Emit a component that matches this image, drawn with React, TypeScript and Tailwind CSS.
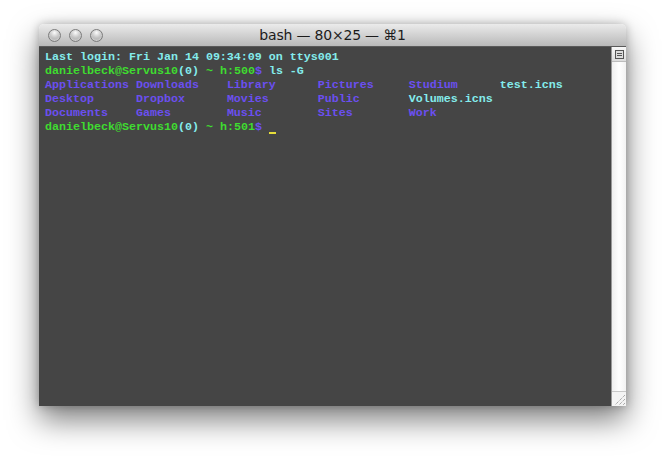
import React from 'react'

const CYAN = 'text-[#84ecec]'
const GREEN = 'text-[#3fdc30]'
const BLUE = 'text-[#6b4ff0]'

const rows = [
  ['Applications', 'Downloads', 'Library', 'Pictures', 'Studium', 'test.icns'],
  ['Desktop', 'Dropbox', 'Movies', 'Public', 'Volumes.icns'],
  ['Documents', 'Games', 'Music', 'Sites', 'Work'],
]

const isFile = (name: string) => name.endsWith('.icns')

function Prompt({ num }: { num: number }) {
  return (
    <>
      <span className={GREEN}>danielbeck@Servus10</span>
      <span className={CYAN}>(0)</span>
      <span className={GREEN}> ~ h:{num}</span>
      <span className={BLUE}>$</span>
    </>
  )
}

function Light() {
  return (
    <div className="w-[13px] h-[13px] rounded-full border border-[#7c7c7c] bg-[radial-gradient(circle_at_50%_25%,#fbfbfb_0%,#c9c9c9_45%,#8f8f8f_100%)] shadow-[inset_0_-1px_2px_rgba(255,255,255,0.6)]" />
  )
}

export default function App() {
  return (
    <div className="w-[665px] h-[460px] bg-white pl-[39px] pt-[24px]">
      <div className="w-[587px] h-[382px] flex flex-col rounded-t-[5px] shadow-[0_14px_30px_rgba(0,0,0,0.5),0_0_10px_rgba(0,0,0,0.25)]">
        {/* title bar */}
        <div className="relative h-[23px] flex items-center rounded-t-[5px] border-b border-[#5a5a5a] bg-gradient-to-b from-[#ebebeb] to-[#b9b9b9]">
          <div className="flex gap-[8px] pl-[9px]">
            <Light />
            <Light />
            <Light />
          </div>
          <div className="absolute inset-0 flex items-center justify-center text-[14px] text-[#1c1c1c] font-['DejaVu_Sans',sans-serif] tracking-[-0.2px]">
            bash — 80×25 — ⌘1
          </div>
        </div>

        <div className="flex flex-1 min-h-0">
          {/* terminal */}
          <div className="flex-1 bg-[#454545] pl-[6px] pt-[3px] font-['Liberation_Mono',monospace] font-bold text-[11.67px] leading-[14px] whitespace-pre">
            <div className={CYAN}>Last login: Fri Jan 14 09:34:09 on ttys001</div>
            <div>
              <Prompt num={500} />
              <span className={CYAN}> ls -G</span>
            </div>
            {rows.map((row, i) => (
              <div key={i}>
                {row.map((name, j) => (
                  <span key={j} className={isFile(name) ? CYAN : BLUE}>
                    {j < row.length - 1 ? name.padEnd(13, ' ') : name}
                  </span>
                ))}
              </div>
            ))}
            <div>
              <Prompt num={501} />
              <span> </span>
              <span className="inline-block w-[7px] h-[14px] align-top border-b-2 border-[#e6dc3a]" />
            </div>
          </div>

          {/* scrollbar */}
          <div className="w-[15px] flex flex-col bg-gradient-to-r from-[#f0f0f0] via-white to-[#f2f2f2] border-l border-[#9a9a9a]">
            <div className="h-[15px] flex items-center justify-center border-b border-[#bcbcbc] bg-gradient-to-b from-[#f8f8f8] to-[#dcdcdc]">
              <div className="w-[9px] h-[9px] border border-[#555] bg-[#ddd] flex flex-col justify-center gap-[1px] px-[1px]">
                <div className="h-[1px] bg-[#555]" />
                <div className="h-[1px] bg-[#555]" />
              </div>
            </div>
            <div className="flex-1" />
            <div className="h-[15px] flex items-end justify-end border-t border-[#c8c8c8] bg-[#f4f4f4]">
              <svg width="14" height="14" viewBox="0 0 14 14">
                <path d="M13 3 L3 13 M13 7 L7 13 M13 11 L11 13" stroke="#8a8a8a" strokeWidth="1" strokeDasharray="1 1" />
              </svg>
            </div>
          </div>
        </div>
      </div>
    </div>
  )
}
